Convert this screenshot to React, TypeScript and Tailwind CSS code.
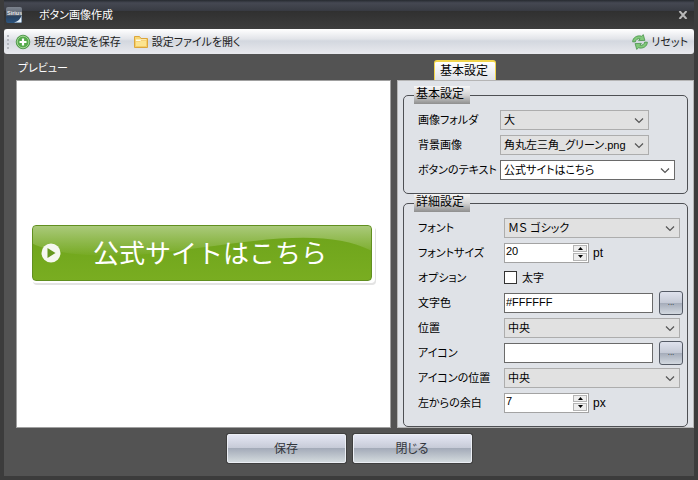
import React from 'react';

interface SelectBoxProps {
    id: string;
    value: string;
    className: string;
}

const SelectBox: React.FC<SelectBoxProps> = ({ id, value, className }) => (
    <div className={`relative h-5 border ${className}`}>
        <select id={id} className="block h-full w-full appearance-none bg-transparent pl-[3px] pr-5 text-[11px] leading-4 text-black outline-none">
            <option>{value}</option>
        </select>
        <svg className="pointer-events-none absolute right-1 top-1.5 h-2 w-2.5" viewBox="0 0 10 8" fill="none">
            <path d="M1 1.5 5 5.5 9 1.5" stroke="#555" strokeWidth="1.2" />
        </svg>
    </div>
);

interface NumberBoxProps {
    id: string;
    value: string;
    unit: string;
}

const NumberBox: React.FC<NumberBoxProps> = ({ id, value, unit }) => (
    <div className="flex items-center gap-1">
        <div className="flex h-5 w-[85px] border border-[#a3a3a3] bg-white p-px">
            <input id={id} type="text" inputMode="numeric" defaultValue={value} className="min-w-0 flex-1 pb-1 text-[11px] leading-3 outline-none" />
            <div className="flex w-3.5 flex-col gap-px">
                <button type="button" aria-label="増やす" className="flex flex-1 items-center justify-center border border-[#b5b5b5] bg-[#eee]">
                    <svg className="h-[3px] w-[5px]" viewBox="0 0 5 3"><path d="M0 3 2.5 0 5 3z" /></svg>
                </button>
                <button type="button" aria-label="減らす" className="flex flex-1 items-center justify-center border border-[#b5b5b5] bg-[#eee]">
                    <svg className="h-[3px] w-[5px]" viewBox="0 0 5 3"><path d="M0 0 2.5 3 5 0z" /></svg>
                </button>
            </div>
        </div>
        <span className="text-xs">{unit}</span>
    </div>
);

interface BrowseFieldProps {
    id: string;
    value: string;
}

const BrowseField: React.FC<BrowseFieldProps> = ({ id, value }) => (
    <div className="flex items-center gap-1.5">
        <input id={id} type="text" defaultValue={value} className="h-5 w-[149px] border border-[#6a6a6a] bg-white px-px pb-0.5 text-[11px] outline-none" />
        <button
            type="button"
            aria-label="参照"
            className="h-6 w-6 rounded-[3px] border border-[#555b66] bg-[linear-gradient(#dfe2ed_0%,#c5cad6_48%,#a4abb9_50%,#d3d9e0_100%)] text-[8px] text-[#222]"
        >
            ...
        </button>
    </div>
);

interface RowProps {
    label: string;
    htmlFor: string;
    wide?: boolean;
    children: React.ReactNode;
}

const Row: React.FC<RowProps> = ({ label, htmlFor, wide, children }) => (
    <div className="flex h-[25px] items-center">
        <label htmlFor={htmlFor} className={`shrink-0 whitespace-nowrap ${wide ? 'w-[86px]' : 'w-[82px]'}`}>
            {label}
        </label>
        {children}
    </div>
);

interface GroupProps {
    title: string;
    children: React.ReactNode;
}

const Group: React.FC<GroupProps> = ({ title, children }) => (
    <fieldset className="min-w-0 rounded-[5px] border border-[#4e5054] pb-[11px] pl-3.5 pt-[3px]">
        <legend className="-ml-1 h-[18px] w-14 bg-linear-to-b from-[#f6f6f6] from-0% via-[#d5d5d5] via-50% to-[#8e8e8e] pl-0.5 text-xs leading-4">
            {title}
        </legend>
        {children}
    </fieldset>
);

const SaveIcon = () => (
    <svg className="h-4 w-4" viewBox="0 0 16 16">
        <circle cx="8" cy="8" r="6.8" fill="#55aa4c" stroke="#3f8c3b" strokeWidth=".8" />
        <circle cx="8" cy="8" r="5.8" fill="none" stroke="#a9d99b" strokeWidth=".9" />
        <path d="M8 4.500v7M4.500 8h7" stroke="#fff" strokeWidth="2.2" />
    </svg>
);

const FolderIcon = () => (
    <svg className="h-4 w-4" viewBox="0 0 16 16">
        <path d="M1.500 13.500v-11h5l1.500 2h6.500v9z" fill="#f7d774" stroke="#dca63c" />
        <path d="M3 5.500h10v3H3z" fill="#fffbe8" />
        <path d="M2.500 12.500v-5H7l1-1h5.500v6z" fill="#fce48f" stroke="#f3c75c" strokeWidth=".7" />
    </svg>
);

const ResetIcon = () => (
    <svg className="h-4 w-4" viewBox="0 0 16 16" fill="#82c87b" stroke="#3d8b41" strokeWidth=".7" strokeLinejoin="round">
        <path d="M.6 7.800C.8 3.600 5 .9 9.600 2.200L11.300.6l1.600 5.800-6.300.2 1.500-1.800C5.600 4.300 3.900 5.600 3.300 7.900z" />
        <path d="M15.400 8.200c-.2 4.200-4.400 6.900-9 5.600l-1.700 1.600-1.600-5.800 6.300-.2-1.500 1.800c2.500.5 4.200-.8 4.800-3.100z" />
    </svg>
);

const AppLogo = () => (
    <svg className="h-4 w-4" viewBox="0 0 16 16">
        <defs>
            <linearGradient id="logo" x1="0" y1="0" x2="0" y2="1">
                <stop offset="0" stopColor="#7d848f" />
                <stop offset=".5" stopColor="#58616e" />
                <stop offset=".6" stopColor="#27405e" />
                <stop offset="1" stopColor="#2d557f" />
            </linearGradient>
        </defs>
        <rect width="16" height="16" rx="2" fill="url(#logo)" />
        <path d="M15.500 8c-.8 4-3.500 6.500-7.500 7.500h7.500z" fill="#e6f1fb" />
        <text x="1" y="7.500" fontSize="5.500" fontWeight="bold" fill="#e5e7ea">Sirius</text>
    </svg>
);

const PreviewButton = () => (
    <div className="relative flex h-14 items-center overflow-hidden rounded border border-[#618f20] bg-linear-to-b from-[#6da31a] to-[#79ad21] pl-2 text-white [font-feature-settings:normal]">
        {/* Gloss */}
        <svg className="absolute inset-0 h-full w-full" viewBox="0 0 340 55" preserveAspectRatio="none">
            <defs>
                <linearGradient id="gloss" x1="0" y1="0" x2="0" y2="1">
                    <stop offset="0" stopColor="#fff" stopOpacity=".42" />
                    <stop offset="1" stopColor="#fff" stopOpacity=".02" />
                </linearGradient>
            </defs>
            <path d="M0 0h340v25C322 16 300 12 272 12 225 12 165 24 110 29 65 33 20 28 0 18z" fill="url(#gloss)" />
        </svg>
        <svg className="relative h-5 w-5 shrink-0" viewBox="0 0 20 20">
            <circle cx="10" cy="10" r="9.500" fill="#f5f7f0" />
            <path d="M6.500 5v10l8-5z" fill="#669820" />
        </svg>
        <span className="relative flex-1 whitespace-nowrap pl-8 pt-0.5 text-[26px] leading-9">公式サイトはこちら</span>
    </div>
);

const footerButton =
    'h-[29px] w-[119px] rounded-xs border border-[#eceff5] bg-[linear-gradient(#e4e6f3_0%,#c7cbd8_47%,#a4abb9_50%,#d3dadd_100%)] text-xs text-[#33363c] shadow-[0_0_0_1px_#3f3f3f]';

export default function App() {
    return (
        <div className="flex min-h-screen flex-col border-x-4 border-b-4 border-[#3c3c3c] bg-[#535353] font-['Liberation_Sans','Noto_Sans_CJK_JP',sans-serif] text-[11px] leading-4 text-black [font-feature-settings:'palt']">
            {/* Title bar */}
            <header className="flex h-[29px] items-center bg-[linear-gradient(#262a30_0%,#454852_10%,#393c44_36%,#303030_38%,#3d3d3d_100%)] pl-0.5 pr-1 text-white">
                <AppLogo />
                <h1 className="flex-1 pl-[17px]">ボタン画像作成</h1>
                <button type="button" aria-label="ウィンドウを閉じる" className="p-0.5">
                    <svg className="h-2 w-2.5" viewBox="0 0 10 8">
                        <path d="M1.500 0 8.500 8M8.500 0 1.500 8" stroke="#b9b9b9" strokeWidth="2" />
                    </svg>
                </button>
            </header>

            {/* Toolbar */}
            <div className="flex h-[25px] items-center rounded-[3px] bg-[linear-gradient(#fff_0%,#e2e4e9_40%,#d3d7df_48%,#e9eaee_100%)] pl-[3px] pr-1.5 text-[#222]">
                <svg className="h-4 w-2" viewBox="0 0 8 16" fill="#b3b6bd">
                    <path d="M0 1h2v2H0zM0 5h2v2H0zM0 9h2v2H0zM0 13h2v2H0z" />
                </svg>
                <button type="button" className="flex items-center gap-[3px]">
                    <SaveIcon />
                    現在の設定を保存
                </button>
                <button type="button" className="ml-3 flex items-center gap-[3px]">
                    <FolderIcon />
                    設定ファイルを開く
                </button>
                <button type="button" className="ml-auto flex items-center gap-[3px]">
                    <ResetIcon />
                    リセット
                </button>
            </div>

            <main className="flex flex-1 gap-1.5 pl-3">
                {/* Preview */}
                <section className="flex min-w-0 flex-1 flex-col">
                    <h2 className="h-[26px] pl-0.5 pt-1.5 text-white">プレビュー</h2>
                    <div className="flex flex-1 flex-col justify-center border border-[#a0a0a0] bg-white px-[15px]">
                        <div className="rounded bg-white pb-0.5 pr-[3px] shadow-[1px_2px_0_#e3e3e3]">
                            <PreviewButton />
                        </div>
                    </div>
                </section>

                {/* Settings */}
                <section className="flex w-[297px] shrink-0 flex-col">
                    <div role="tablist" className="flex h-[26px] items-end pl-[37px]">
                        <button
                            type="button"
                            role="tab"
                            aria-selected="true"
                            className="h-5 w-[62px] rounded-t-[3px] border-x border-t-2 border-[#f0d44c] bg-linear-to-b from-white to-[#dfe2e7] pr-0.5 text-xs leading-4"
                        >
                            基本設定
                        </button>
                    </div>
                    <div role="tabpanel" className="flex-1 border border-[#b5b5b5] bg-[#dfe2e7] px-[5px] pt-[5px]">
                        <Group title="基本設定">
                            <Row label="画像フォルダ" htmlFor="folder">
                                <SelectBox id="folder" value="大" className="w-[149px] border-[#adadad] bg-[#e1e1e1]" />
                            </Row>
                            <Row label="背景画像" htmlFor="background">
                                <SelectBox id="background" value="角丸左三角_グリーン.png" className="w-[149px] border-[#adadad] bg-[#e1e1e1]" />
                            </Row>
                            <Row label="ボタンのテキスト" htmlFor="caption">
                                <SelectBox id="caption" value="公式サイトはこちら" className="w-[175px] border-[#6a6a6a] bg-white" />
                            </Row>
                        </Group>
                        <Group title="詳細設定">
                            <Row label="フォント" htmlFor="font" wide>
                                <SelectBox id="font" value="ＭＳ ゴシック" className="w-[176px] border-[#adadad] bg-[#e1e1e1]" />
                            </Row>
                            <Row label="フォントサイズ" htmlFor="size" wide>
                                <NumberBox id="size" value="20" unit="pt" />
                            </Row>
                            <Row label="オプション" htmlFor="bold" wide>
                                <input id="bold" type="checkbox" className="h-[13px] w-[13px] appearance-none border border-[#333] bg-white checked:bg-[#333]" />
                                <label htmlFor="bold" className="pl-[5px]">太字</label>
                            </Row>
                            <Row label="文字色" htmlFor="color" wide>
                                <BrowseField id="color" value="#FFFFFF" />
                            </Row>
                            <Row label="位置" htmlFor="position" wide>
                                <SelectBox id="position" value="中央" className="w-[176px] border-[#adadad] bg-[#e1e1e1]" />
                            </Row>
                            <Row label="アイコン" htmlFor="icon" wide>
                                <BrowseField id="icon" value="" />
                            </Row>
                            <Row label="アイコンの位置" htmlFor="icon-position" wide>
                                <SelectBox id="icon-position" value="中央" className="w-[176px] border-[#adadad] bg-[#e1e1e1]" />
                            </Row>
                            <Row label="左からの余白" htmlFor="margin" wide>
                                <NumberBox id="margin" value="7" unit="px" />
                            </Row>
                        </Group>
                    </div>
                </section>
            </main>

            <footer className="flex h-12 justify-center gap-[7px] pt-1.5">
                <button type="button" className={footerButton}>保存</button>
                <button type="button" className={footerButton}>閉じる</button>
            </footer>
        </div>
    );
}
